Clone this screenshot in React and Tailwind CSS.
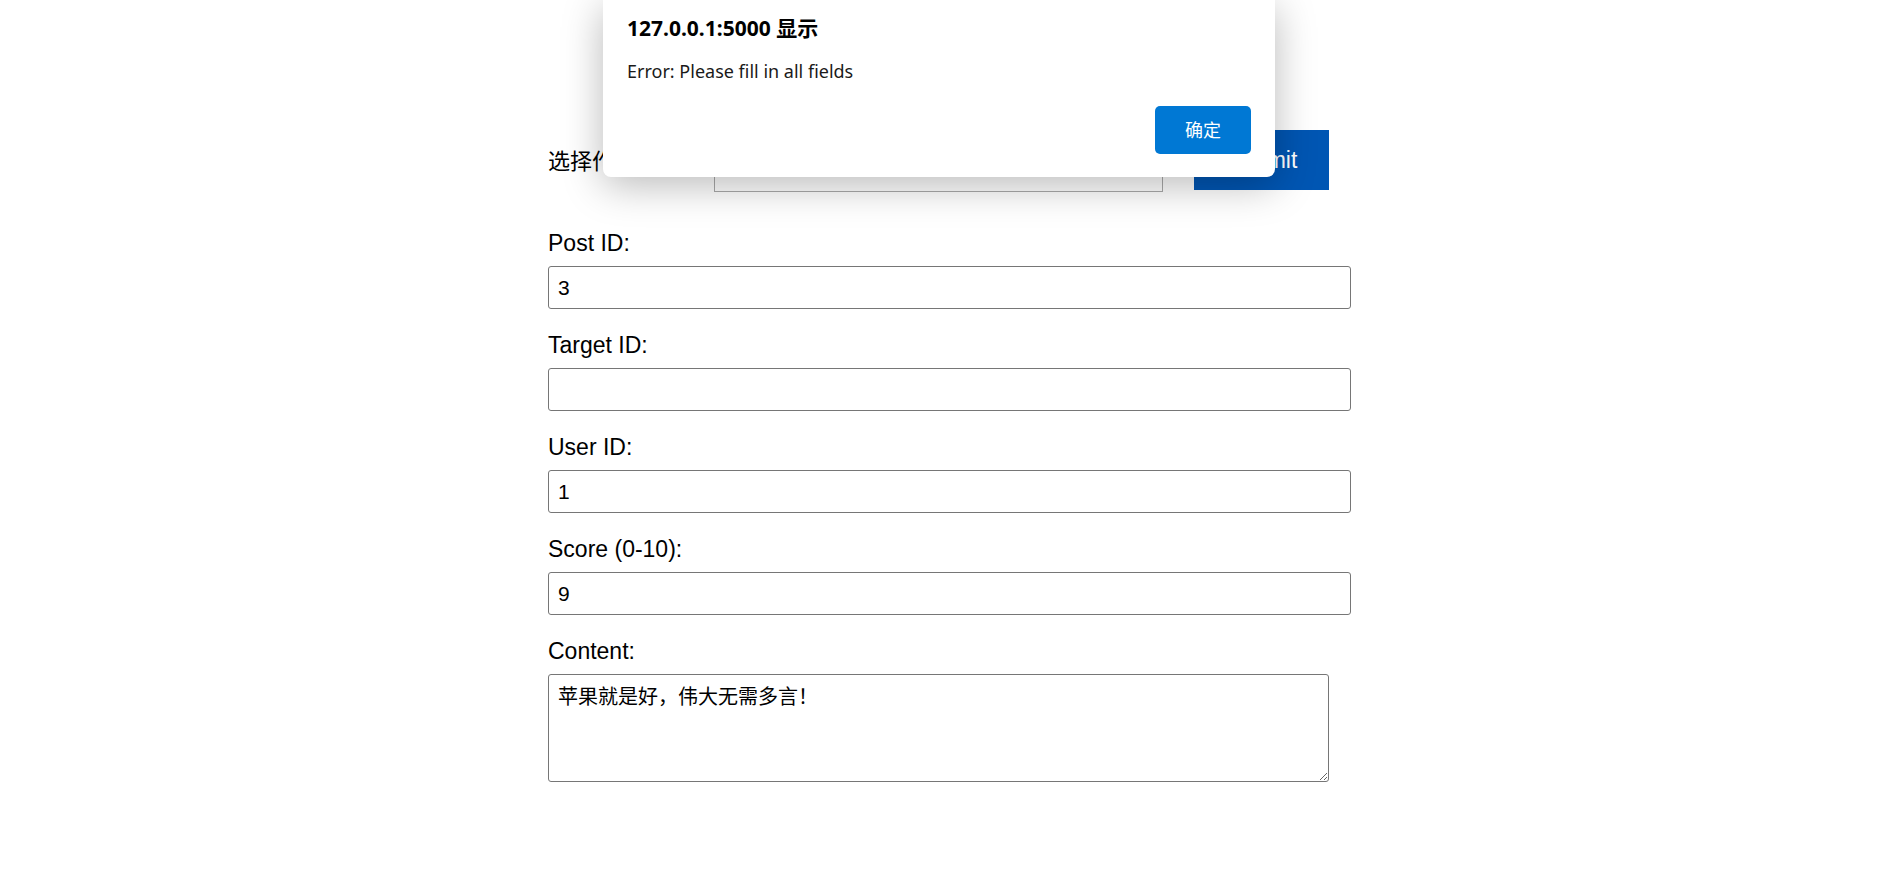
export default function App() {
  const fields = [
    { label: "Post ID:", value: "3" },
    { label: "Target ID:", value: "" },
    { label: "User ID:", value: "1" },
    { label: "Score (0-10):", value: "9" },
  ];

  return (
    <div className="relative min-h-[882px] bg-white font-['Liberation_Sans','Noto_Sans_CJK_SC',sans-serif] text-black">
      <div className="ml-[548px] w-[803px] pt-[130px]">
        <div className="flex items-start">
          <label className="w-[166px] self-center text-[22px] leading-[27px]">选择作品:</label>
          <select className="h-[62px] w-[449px] border border-[#aaaaaa] bg-white px-2 text-[20px]">
            <option></option>
          </select>
          <button className="ml-[31px] h-[60px] w-[135px] bg-[#0056b3] text-[23px] text-white">
            Submit
          </button>
        </div>

        <form className="mt-[38px]">
          {fields.map((f) => (
            <div key={f.label} className="mb-[23px]">
              <label className="mb-[9px] block text-[23px] leading-[27px]">{f.label}</label>
              <input
                type="text"
                defaultValue={f.value}
                className="block h-[43px] w-full rounded-[3px] border border-[#767676] px-[9px] text-[21px]"
              />
            </div>
          ))}
          <div>
            <label className="mb-[9px] block text-[23px] leading-[27px]">Content:</label>
            <textarea
              defaultValue="苹果就是好，伟大无需多言！"
              className="block h-[108px] w-[781px] rounded-[3px] border border-[#767676] px-[9px] py-[9px] font-['Noto_Sans_CJK_SC',serif] text-[20px] leading-[24px]"
            />
          </div>
        </form>
      </div>

      <div className="absolute left-[603px] top-0 flex h-[177px] w-[672px] flex-col rounded-b-[8px] bg-white px-[24px] font-['Noto_Sans','Noto_Sans_CJK_SC',sans-serif] shadow-[0_8px_40px_rgba(0,0,0,0.28)]">
        <div className="mt-[14px] text-[21px] font-bold leading-[28px]">127.0.0.1:5000 显示</div>
        <div className="mt-[16px] text-[18px] leading-[26px] text-[#1a1a1a]">Error: Please fill in all fields</div>
        <div className="mt-auto mb-[23px] flex justify-end">
          <button className="h-[48px] w-[96px] rounded-[5px] bg-[#0078d4] text-[18px] text-white">确定</button>
        </div>
      </div>
    </div>
  );
}
